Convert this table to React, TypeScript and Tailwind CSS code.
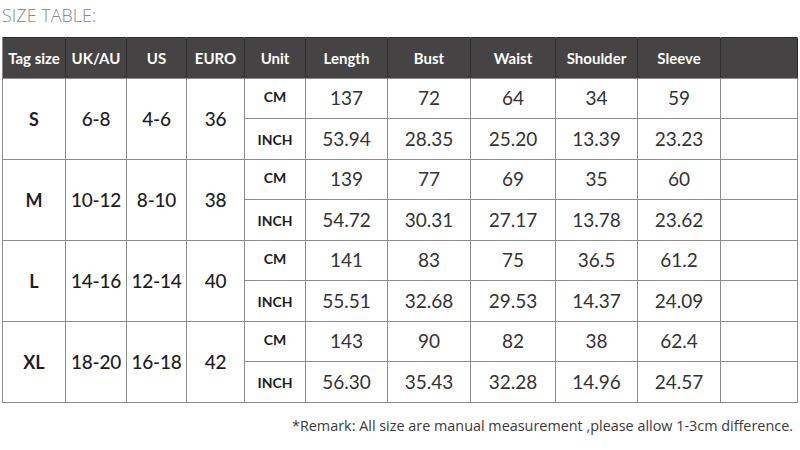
import React from 'react';

const headers = ['Tag size', 'UK/AU', 'US', 'EURO', 'Unit', 'Length', 'Bust', 'Waist', 'Shoulder', 'Sleeve', ''];

const sizes = [
  { tag: 'S', uk: '6-8', us: '4-6', euro: '36', cm: ['137', '72', '64', '34', '59'], inch: ['53.94', '28.35', '25.20', '13.39', '23.23'] },
  { tag: 'M', uk: '10-12', us: '8-10', euro: '38', cm: ['139', '77', '69', '35', '60'], inch: ['54.72', '30.31', '27.17', '13.78', '23.62'] },
  { tag: 'L', uk: '14-16', us: '12-14', euro: '40', cm: ['141', '83', '75', '36.5', '61.2'], inch: ['55.51', '32.68', '29.53', '14.37', '24.09'] },
  { tag: 'XL', uk: '18-20', us: '16-18', euro: '42', cm: ['143', '90', '82', '38', '62.4'], inch: ['56.30', '35.43', '32.28', '14.96', '24.57'] },
];

// merged cells: size label + the three conversions
const spanCell = 'bg-white row-span-2 flex items-center justify-center text-[19px] font-medium text-[#1e1e1e] tracking-[-0.2px]';
const tagCell = 'bg-white row-span-2 flex items-center justify-center text-[18px] font-bold text-[#1e1e1e]';
const valCell = 'bg-white flex items-center justify-center text-[19px] text-[#333]';
const unitCell = 'bg-white flex items-center justify-center text-[14px] font-bold text-[#1e1e1e]';

const App: React.FC = () => {
  return (
    <div className="w-[800px] h-[450px] bg-white overflow-hidden font-['Lato','Open_Sans',sans-serif]">
      <div className="pl-[2px] pt-[4px] h-[37px] text-[18px] font-light text-[#8a8a8a] leading-[22px] font-['Open_Sans',sans-serif]">
        SIZE TABLE:
      </div>

      <div className="ml-[2px] w-[796px] grid gap-px p-px bg-[#8c8c8c] grid-cols-[62px_60px_59px_57px_60px_81px_82px_84px_81px_82px_76px] grid-rows-[40px_39px_40px_39px_40px_39px_40px_39px_40px]">
        {headers.map((h, i) => (
          <div key={i} className="bg-[#454343] text-white font-bold text-[15px] flex items-center justify-center shadow-[1px_0_0_#2e2d2d,0_-1px_0_#2e2d2d]">
            {h}
          </div>
        ))}
        {sizes.map((s) => (
          <React.Fragment key={s.tag}>
            <div className={tagCell}>{s.tag}</div>
            <div className={spanCell}>{s.uk}</div>
            <div className={spanCell}>{s.us}</div>
            <div className={spanCell}>{s.euro}</div>
            <div className={unitCell + ' pb-[4px]'}>CM</div>
            {s.cm.map((v, i) => (
              <div key={'c' + i} className={valCell}>{v}</div>
            ))}
            <div className="bg-white" />
            <div className={unitCell}>INCH</div>
            {s.inch.map((v, i) => (
              <div key={'i' + i} className={valCell}>{v}</div>
            ))}
            <div className="bg-white" />
          </React.Fragment>
        ))}
      </div>

      <div className="mt-[12px] pr-[7px] text-right text-[14.4px] text-[#3a3a3a] font-['Open_Sans',sans-serif]">
        *Remark: All size are manual measurement ,please allow 1-3cm difference.
      </div>
    </div>
  );
};

export default App;
